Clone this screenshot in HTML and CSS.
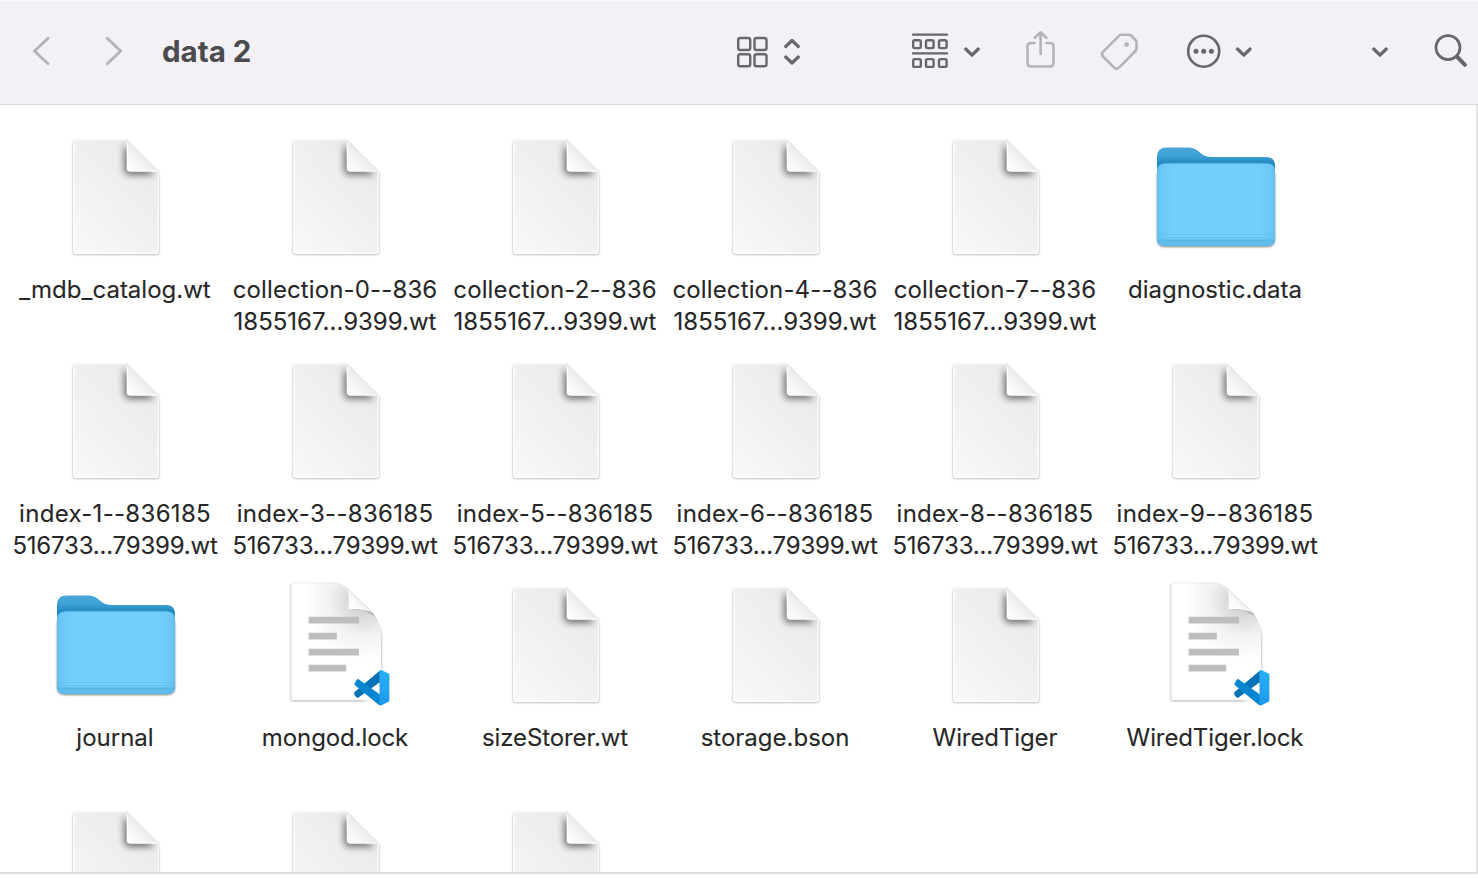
FILE: index.html
```
<!DOCTYPE html>
<html lang="en">
<head>
<meta charset="utf-8">
<title>data 2</title>
<link rel="stylesheet" href="styles.css">
</head>
<body>
<svg class="defs" width="0" height="0" aria-hidden="true">
  <defs>
    <linearGradient id="paper" x1=".9" y1="0" x2=".1" y2="1"><stop offset="0" stop-color="#e9e9e9"/><stop offset=".5" stop-color="#f0f0f0"/><stop offset="1" stop-color="#f8f8f8"/></linearGradient>
    <linearGradient id="flap" x1="0.55" y1="0.45" x2="0" y2="1"><stop offset="0" stop-color="#e6e6e6"/><stop offset=".5" stop-color="#f7f7f7"/><stop offset="1" stop-color="#fff"/></linearGradient>
    <linearGradient id="back" gradientUnits="userSpaceOnUse" x1="0" y1="14" x2="0" y2="38"><stop offset="0" stop-color="#4aa8da"/><stop offset=".4" stop-color="#3c9fd3"/><stop offset=".75" stop-color="#1885c0"/><stop offset="1" stop-color="#0f7eb9"/></linearGradient>
    <linearGradient id="front" x1="0" y1="0" x2="1" y2="0"><stop offset="0" stop-color="#62bfee"/><stop offset=".05" stop-color="#6dc9f8"/><stop offset=".14" stop-color="#75cffc"/><stop offset=".86" stop-color="#75cffc"/><stop offset=".95" stop-color="#6dc9f8"/><stop offset="1" stop-color="#62bfee"/></linearGradient>
    <radialGradient id="sheet" gradientUnits="userSpaceOnUse" cx="92" cy="20" r="70"><stop offset="0" stop-color="#c8c8c8"/><stop offset=".25" stop-color="#dcdcdc"/><stop offset=".5" stop-color="#f2f2f2"/><stop offset=".85" stop-color="#fff"/></radialGradient>
    <linearGradient id="curl" gradientUnits="userSpaceOnUse" x1="89" y1="18" x2="78" y2="29"><stop offset="0" stop-color="#ebebeb"/><stop offset=".4" stop-color="#fafafa"/><stop offset="1" stop-color="#fff"/></linearGradient>
    <linearGradient id="ribbon" x1="0" y1="0" x2="0" y2="1"><stop offset="0" stop-color="#28b0f6"/><stop offset="1" stop-color="#1e98ec"/></linearGradient>
    <filter id="soft" x="-20%" y="-20%" width="140%" height="140%"><feGaussianBlur stdDeviation="1.2"/></filter>
    <filter id="foldblur" x="-50%" y="-50%" width="200%" height="200%"><feGaussianBlur stdDeviation="3.6"/></filter>
    <clipPath id="pageclip"><path d="M24 6H75L107 38.500V118q0 3-3 3H24q-3 0-3-3V9.500q0-3 3-3Z"/></clipPath>
    <symbol id="doc" viewBox="0 0 128 128">
      <path d="M24 8H74L107 40V119q0 2.500-3 2.500H24q-3 0-3-2.500V10.500q0-2.500 3-2.500Z" fill="#000" opacity=".36" filter="url(#soft)"/>
      <path d="M24 6H75L107 38.500V118q0 3-3 3H24q-3 0-3-3V9q0-3 3-3Z" fill="url(#paper)"/>
      <g clip-path="url(#pageclip)"><path d="M72 11V36q0 6 6 6H103Z" fill="#000" opacity=".52" filter="url(#foldblur)"/></g>
      <path d="M75 7H24.200q-2.400 0-2.400 2.300V118q0 2.200 2.200 2.200H104q2.200 0 2.200-2.200V39" fill="none" stroke="#fff" stroke-width="1.600" opacity=".6"/>
      <path d="M75 6V35q0 3.500 3.500 3.500H107Z" fill="url(#flap)"/>
      <path d="M75.300 10V35q0 3 3.200 3H105" fill="none" stroke="#fff" stroke-width="1.200"/>
    </symbol>
    <symbol id="folder" viewBox="0 0 128 128">
      <path d="M5 40H123V106q0 8-8 8H13q-8 0-8-8Z" fill="#000" opacity=".5" filter="url(#soft)"/>
      <path d="M5 24q0-9.500 9.500-9.500H37c10 0 11 9.500 22 9.500H114q9 0 9 9V60H5Z" fill="url(#back)"/>
      <path d="M13 30.500H115q8 0 8 8V105q0 8-8 8H13q-8 0-8-8V38.500q0-8 8-8Z" fill="url(#front)"/>
      <path d="M5.600 37q1-6 7.400-6H115q6.400 0 7.400 6" fill="none" stroke="#68c3f2" stroke-width="1.200"/>
      <path d="M5 101.500H123M5 104.800H123" stroke="#66c1f0" stroke-width="1"/>
      <path d="M5 107H123q-1 6-8 6H13q-7 0-8-6Z" fill="#5fbceb"/>
      <path d="M5 107H123" stroke="#54b1e1" stroke-width="1.200"/>
    </symbol>
    <symbol id="lock" viewBox="0 0 128 128">
      <path d="M19 3H60C68 4 72 8 76 12L98 34Q109 43 109.300 56V120H19Z" fill="#000" opacity=".38" filter="url(#soft)"/>
      <path d="M19 1.500H62C68 1.500 72 4 76 8L100.500 31.500Q109 40 109 54V119.300H19Z" fill="url(#sheet)"/>
      <path d="M19.500 119V2H62" fill="none" stroke="#ededed"/>
      <path d="M78 28.500Q92 27 104 36.500L99 30Z" fill="#9a9a9a" opacity=".6"/>
      <path d="M73 5.200C78 11 77 20 76.500 28.400Q90 26.500 101 32Z" fill="url(#curl)"/>
      <path d="M73.500 5.700L101 32" stroke="#dadada" stroke-width=".8"/>
      <path d="M36.600 35.700H87V42.500H36.600ZM36.600 51.700H64.800V58.500H36.600ZM36.600 67.700H87V74.500H36.600ZM36.600 83.700H74.200V90.500H36.600Z" fill="#bcbfbe"/>
      <path d="M109 87L77 108L102 127L119 120V92Z" fill="#fff" opacity=".85" filter="url(#soft)"/>
      <path d="M82.500 111L108 89.500V101L86.500 116.500q-1 .6-2 0l-2-2.500q-.8-1.800 0-3Z" fill="#0871b7"/>
      <path d="M82.500 102.500L84.700 98.500q1-.8 2.200 0L108 113.500V124.300q-1-.2-2-1L82.700 104Z" fill="#0787d2"/>
      <path d="M108 89.300q.5-.4 1.300-.2L116.600 92.500q.8.500.8 1.300V119.500q0 .9-.8 1.300L109.500 124.300q-1 .3-2-.2V89.800Z" fill="url(#ribbon)"/>
    </symbol>
  </defs>
</svg>
<header class="toolbar">
  <svg class="icon" width="1478" height="104" viewBox="0 0 1478 104" aria-hidden="true">
    <g fill="none" stroke-linecap="round" stroke-linejoin="round">
      <g stroke="#b5b3b8" stroke-width="2.900">
        <path d="M48 38.200L34.500 51L48 63.700M107.200 38.200L120.700 51L107.200 63.700"/>
        <path d="M1034.500 43H1031q-3.500 0-3.500 3.500V63q0 3.500 3.500 3.500H1050q3.500 0 3.500-3.500V46.500q0-3.500-3.500-3.500H1046.500M1040.600 54V33M1034.800 37.800L1040.600 32.300L1046.400 37.800" stroke-width="2.600"/>
        <path d="M1121.500 34.700H1129q1.200 0 2 .8L1135.600 40q.9 1 .9 2.200V48.800q0 1.300-1 2.200L1119 67.700q-2.400 2.400-4.800 0L1103 56.500q-2.200-2.200 0-4.600L1119.200 35.700q1-1 2.300-1Z" stroke-width="2.600"/>
      </g>
      <circle cx="1126.600" cy="44.600" r="2.400" fill="#b5b3b8"/>
      <g stroke="#69676c" stroke-width="2.400">
        <rect x="738.200" y="38" width="12" height="12" rx="2"/><rect x="754.500" y="38" width="12" height="12" rx="2"/>
        <rect x="738.200" y="54.200" width="12" height="12" rx="2"/><rect x="754.500" y="54.200" width="12" height="12" rx="2"/>
        <path d="M913 34.600H947M913 53.400H947"/>
        <rect x="913.200" y="40.300" width="7.600" height="7.800" rx="1.500"/><rect x="926" y="40.300" width="7.600" height="7.800" rx="1.500"/><rect x="939" y="40.300" width="7.600" height="7.800" rx="1.500"/>
        <rect x="913.200" y="59.100" width="7.600" height="7.800" rx="1.500"/><rect x="926" y="59.100" width="7.600" height="7.800" rx="1.500"/><rect x="939" y="59.100" width="7.600" height="7.800" rx="1.500"/>
      </g>
      <g stroke="#69676c" stroke-width="3.200">
        <path d="M785.700 46.500L792 40.500L798.300 46.500M785.700 57L792 63L798.300 57M965.700 49L972 55.200L978.300 49M1237.500 49L1243.800 55.200L1250.100 49M1373.700 49L1380 55.200L1386.300 49"/>
        <circle cx="1203.700" cy="51.200" r="15.500" stroke-width="2.600"/>
        <circle cx="1448" cy="47.600" r="12" stroke-width="2.800"/>
        <path d="M1457.300 57L1465 64.900" stroke-width="4"/>
      </g>
      <g fill="#69676c"><circle cx="1196" cy="51.200" r="2.500"/><circle cx="1203.700" cy="51.200" r="2.500"/><circle cx="1211.400" cy="51.200" r="2.500"/></g>
    </g>
  </svg>
  <h1 class="title">data 2</h1>
</header>
<main class="files">
  <div class="file"><svg class="art"><use href="#doc"/></svg><p class="name"><span>_mdb_catalog.wt</span></p></div>
  <div class="file"><svg class="art"><use href="#doc"/></svg><p class="name"><span class="loose">collection-0--836</span><span>1855167...9399.wt</span></p></div>
  <div class="file"><svg class="art"><use href="#doc"/></svg><p class="name"><span class="loose">collection-2--836</span><span>1855167...9399.wt</span></p></div>
  <div class="file"><svg class="art"><use href="#doc"/></svg><p class="name"><span class="loose">collection-4--836</span><span>1855167...9399.wt</span></p></div>
  <div class="file"><svg class="art"><use href="#doc"/></svg><p class="name"><span class="loose">collection-7--836</span><span>1855167...9399.wt</span></p></div>
  <div class="file"><svg class="art"><use href="#folder"/></svg><p class="name"><span>diagnostic.data</span></p></div>

  <div class="file"><svg class="art"><use href="#doc"/></svg><p class="name"><span class="looser">index-1--836185</span><span class="tight">516733...79399.wt</span></p></div>
  <div class="file"><svg class="art"><use href="#doc"/></svg><p class="name"><span class="looser">index-3--836185</span><span class="tight">516733...79399.wt</span></p></div>
  <div class="file"><svg class="art"><use href="#doc"/></svg><p class="name"><span class="looser">index-5--836185</span><span class="tight">516733...79399.wt</span></p></div>
  <div class="file"><svg class="art"><use href="#doc"/></svg><p class="name"><span class="looser">index-6--836185</span><span class="tight">516733...79399.wt</span></p></div>
  <div class="file"><svg class="art"><use href="#doc"/></svg><p class="name"><span class="looser">index-8--836185</span><span class="tight">516733...79399.wt</span></p></div>
  <div class="file"><svg class="art"><use href="#doc"/></svg><p class="name"><span class="looser">index-9--836185</span><span class="tight">516733...79399.wt</span></p></div>

  <div class="file"><svg class="art"><use href="#folder"/></svg><p class="name"><span>journal</span></p></div>
  <div class="file"><svg class="art"><use href="#lock"/></svg><p class="name"><span class="snug">mongod.lock</span></p></div>
  <div class="file"><svg class="art"><use href="#doc"/></svg><p class="name"><span class="snug">sizeStorer.wt</span></p></div>
  <div class="file"><svg class="art"><use href="#doc"/></svg><p class="name"><span>storage.bson</span></p></div>
  <div class="file"><svg class="art"><use href="#doc"/></svg><p class="name"><span class="snug">WiredTiger</span></p></div>
  <div class="file"><svg class="art"><use href="#lock"/></svg><p class="name"><span class="snug">WiredTiger.lock</span></p></div>

  <div class="file"><svg class="art"><use href="#doc"/></svg></div>
  <div class="file"><svg class="art"><use href="#doc"/></svg></div>
  <div class="file"><svg class="art"><use href="#doc"/></svg></div>
</main>
</body>
</html>
```
FILE: styles.css
```
* { box-sizing: border-box; }
body {
  margin: 0;
  width: 1478px;
  height: 878px;
  overflow: hidden;
  background: #fff;
  font-family: Inter, "Liberation Sans", sans-serif;
  color: #272727;
}
.defs { position: absolute; }
.toolbar {
  display: grid;
  height: 105px;
  background: #f3f1f6;
  border-top: 1px solid #fafafb;
  border-bottom: 1px solid #d8d7da;
}
.icon { grid-area: 1 / 1; margin-top: -1px; }
.title {
  grid-area: 1 / 1;
  margin: 0 0 0 162px;
  font-size: 29.5px;
  line-height: 101px;
  font-weight: 700;
  letter-spacing: 0;
  color: #4b4a4c;
}
.files {
  display: grid;
  grid-template-columns: repeat(6, 220px);
  grid-auto-rows: 224px;
  align-content: start;
  height: 769px;
  padding: 28px 0 0 6px;
  overflow: hidden;
  border-right: 2px solid #e5e5e5;
  border-bottom: 2px solid #dedede;
}
.file { display: flex; flex-direction: column; align-items: center; gap: 13px; }
.art { width: 128px; height: 128px; flex: none; }
.name {
  display: flex;
  flex-direction: column;
  align-items: center;
  margin: 0;
  padding-right: 2px;
  font-size: 24px;
  line-height: 32px;
  white-space: nowrap;
  -webkit-text-stroke: 0.1px #272727;
}
.loose { letter-spacing: 0.13px; }
.looser { letter-spacing: 0.3px; }
.tight { letter-spacing: -0.2px; }
.snug { letter-spacing: -0.1px; }
```
